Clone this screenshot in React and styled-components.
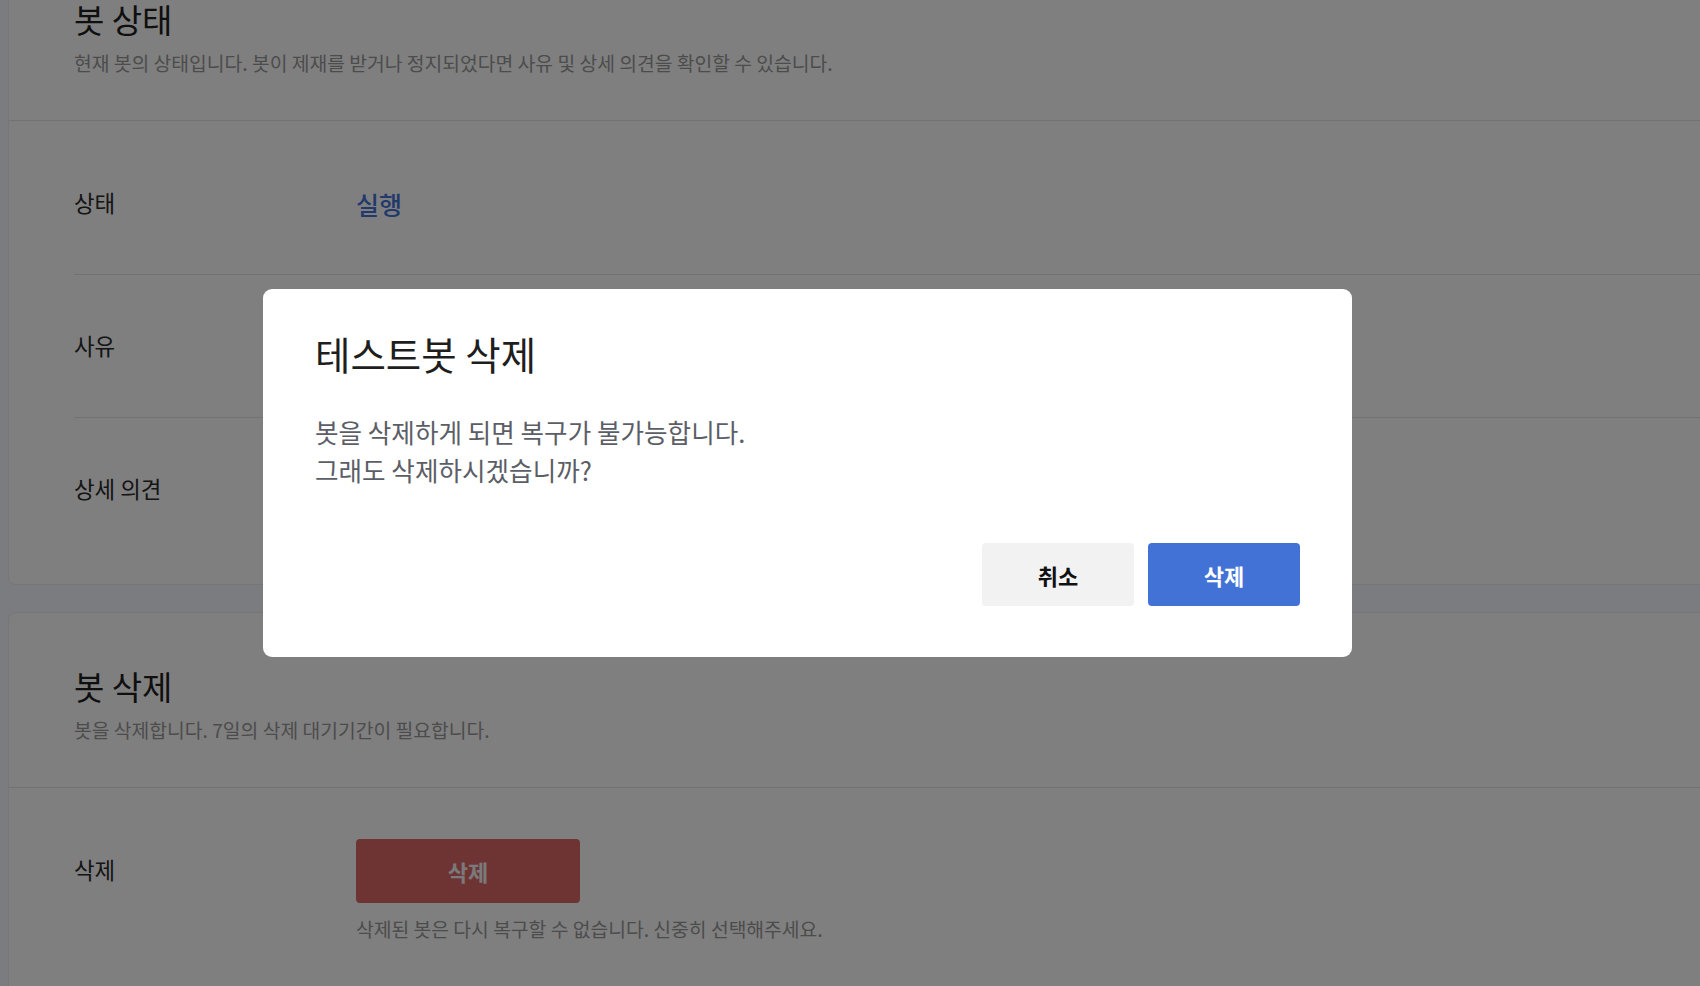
import React from "react";
import styled, { createGlobalStyle } from "styled-components";

const GlobalStyle = createGlobalStyle`
  html, body {
    margin: 0;
    padding: 0;
    overflow: hidden;
    background: #f6f8fe;
  }
  body {
    font-family: "Noto Sans CJK KR", "Noto Sans", sans-serif;
    color: #222;
  }
`;

const Page = styled.div`
  padding-left: 8px;
  margin-top: -55px;
  height: 1100px;
`;

const Card = styled.section`
  background: #fff;
  border: 1px solid #ececec;
  border-radius: 8px;
  margin-right: -40px;
  margin-bottom: 27px;
`;

const CardHeader = styled.div`
  padding: 53px 0 44px 65px;
  border-bottom: 1px solid #e4e4e4;
`;

const Title = styled.h2`
  margin: 0;
  font-size: 33px;
  line-height: 40px;
  font-weight: 400;
  color: #1e1e1e;
`;

const Description = styled.p`
  margin: 11px 0 0;
  font-size: 19.3px;
  line-height: 26px;
  color: #999;
`;

const Rows = styled.div`
  padding: 11px 0 24px 65px;
`;

const Row = styled.div`
  display: flex;
  align-items: flex-start;
  padding: 40px 0 39px;
  border-top: ${(p) => (p.first ? "none" : "1px solid #e4e4e4")};
`;

const Label = styled.div`
  width: 282px;
  flex-shrink: 0;
  height: 60px;
  display: flex;
  align-items: center;
  font-size: 22.4px;
  color: #2a2a2a;
`;

const Value = styled.div`
  min-height: 63px;
  display: flex;
  flex-direction: column;
  justify-content: center;
  font-size: 25px;
  font-weight: 500;
  color: ${(p) => p.color || "#333"};
`;

const DangerButton = styled.button`
  width: 224px;
  height: 64px;
  border: none;
  border-radius: 4px;
  background: #dc6868;
  color: #f4f4f4;
  font-family: inherit;
  font-size: 22px;
  font-weight: 700;
`;

const Hint = styled.p`
  margin: 14px 0 0;
  font-size: 19.3px;
  line-height: 24px;
  font-weight: 400;
  color: #999;
`;

// dimmed overlay + dialog
const Overlay = styled.div`
  position: fixed;
  inset: 0;
  background: rgba(0, 0, 0, 0.5);
  padding: 289px 0 0 263px;
`;

const Modal = styled.div`
  width: 1089px;
  box-sizing: border-box;
  background: #fff;
  border-radius: 9px;
  padding: 43px 52px 51px;
`;

const ModalTitle = styled.h3`
  margin: 0;
  font-size: 38.5px;
  line-height: 43px;
  font-weight: 400;
  color: #1e1e1e;
`;

const ModalText = styled.p`
  margin: 38px 0 0;
  font-size: 25.6px;
  line-height: 38px;
  color: #5b5e66;
`;

const Actions = styled.div`
  display: flex;
  justify-content: flex-end;
  gap: 14px;
  margin-top: 54px;
`;

const ActionButton = styled.button`
  width: 152px;
  height: 63px;
  border: none;
  border-radius: 4px;
  font-family: inherit;
  font-size: 22px;
  font-weight: 700;
  background: ${(p) => (p.primary ? "#4272d6" : "#f2f2f2")};
  color: ${(p) => (p.primary ? "#fff" : "#111")};
`;

export default function App() {
  return (
    <>
      <GlobalStyle />
      <Page>
        <Card>
          <CardHeader>
            <Title>봇 상태</Title>
            <Description>
              현재 봇의 상태입니다. 봇이 제재를 받거나 정지되었다면 사유 및 상세 의견을 확인할 수 있습니다.
            </Description>
          </CardHeader>
          <Rows>
            <Row first>
              <Label>상태</Label>
              <Value color="#4272d6">실행</Value>
            </Row>
            <Row>
              <Label>사유</Label>
              <Value />
            </Row>
            <Row>
              <Label>상세 의견</Label>
              <Value />
            </Row>
          </Rows>
        </Card>
        <Card>
          <CardHeader>
            <Title>봇 삭제</Title>
            <Description>봇을 삭제합니다. 7일의 삭제 대기기간이 필요합니다.</Description>
          </CardHeader>
          <Rows>
            <Row first>
              <Label>삭제</Label>
              <Value>
                <DangerButton>삭제</DangerButton>
                <Hint>삭제된 봇은 다시 복구할 수 없습니다. 신중히 선택해주세요.</Hint>
              </Value>
            </Row>
          </Rows>
        </Card>
      </Page>
      <Overlay>
        <Modal>
          <ModalTitle>테스트봇 삭제</ModalTitle>
          <ModalText>
            봇을 삭제하게 되면 복구가 불가능합니다.
            <br />
            그래도 삭제하시겠습니까?
          </ModalText>
          <Actions>
            <ActionButton>취소</ActionButton>
            <ActionButton primary>삭제</ActionButton>
          </Actions>
        </Modal>
      </Overlay>
    </>
  );
}
